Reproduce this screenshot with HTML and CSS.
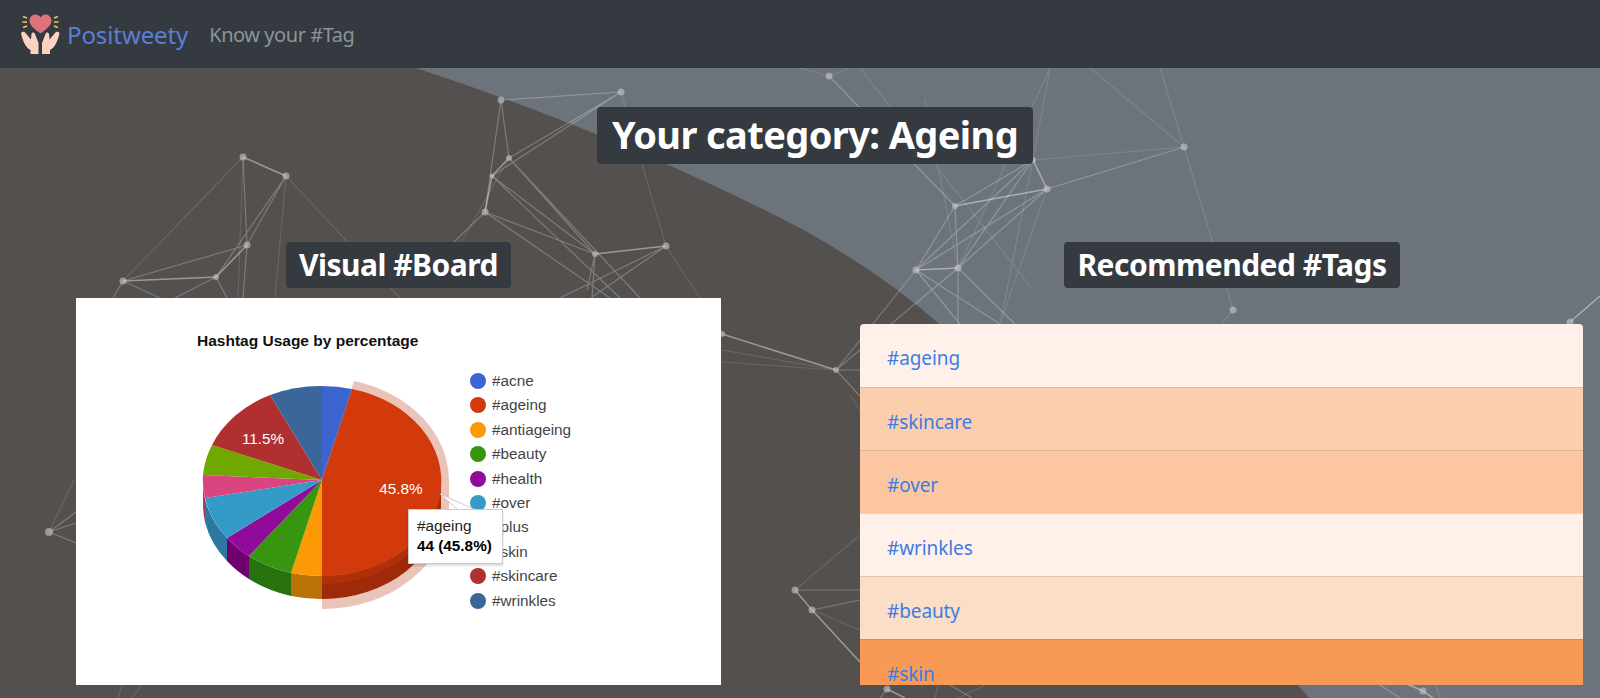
FILE: index.html
```html
<!DOCTYPE html>
<html lang="en">
<head>
    <meta charset="UTF-8">
    <meta name="viewport" content="width=device-width, initial-scale=1.0">
    <title>Positweety</title>
    <link rel="stylesheet" href="styles.css">
</head>
<body>

    <!-- Background: curved panel and network lines -->
    <svg class="backdrop" viewBox="0 0 1600 698" aria-hidden="true">
        <path class="panel" d="M416 68 Q620 135 800 228 Q880 272 938 323 L1298 685 L1309 698 H0 V68 Z"/>
        <path class="edge strong" d="M243 157L286 176 M509 158L492 176 M492 176L485 212 M247 245L216 277 M123 281L216 277 M595 254L666 246 M916 270L958 268 M1033 160L1047 189 M955 206L1047 189 M795 590L812 610 M812 610L860 662 M722 334L836 370 M1570 322L1600 296 M887 689L905 698 M1423 691L1433 698 M1423 691L1398 680"/>
        <path class="edge mid" d="M829 76L955 206 M243 157L247 245 M286 176L247 245 M286 176L216 277 M247 245L123 281 M501 100L621 92 M501 100L509 158 M501 100L485 212 M621 92L509 158 M621 92L492 176 M509 158L595 254 M492 176L595 254 M485 212L595 254 M509 158L640 298 M492 176L620 298 M485 212L420 275 M485 212L610 298 M595 254L587 290 M666 246L592 297 M666 246L560 298 M595 254L592 298 M1033 160L955 206 M1184 147L1047 189 M955 206L916 270 M955 206L958 268 M1033 160L916 270 M1047 189L916 270 M1047 189L958 268 M1033 160L958 268 M916 270L1000 324 M958 268L1015 324 M958 268L958 324 M916 270L960 324 M916 270L836 370 M958 268L836 370 M123 281L113 298 M123 281L160 298 M216 277L175 298 M216 277L227 298 M247 245L243 298 M812 610L860 600 M795 590L860 590 M49 532L76 512 M49 532L76 523 M49 532L76 543 M836 370L860 370 M836 370L860 396 M887 689L880 698 M950 685L972 698 M1380 685L1400 698"/>
        <path class="edge faint" d="M243 157L123 281 M243 157L238 298 M286 176L400 298 M286 176L275 298 M509 158L440 280 M666 246L700 298 M621 92L666 246 M829 76L800 68 M829 76L850 68 M860 68L1033 290 M1050 68L1033 160 M1050 68L958 268 M1090 68L1184 147 M1160 68L1184 147 M1184 147L1233 310 M1033 160L1000 324 M1047 189L1000 324 M1184 147L1033 160 M925 100L958 268 M1233 310L1215 332 M1570 322L1560 328 M722 350L836 370 M722 362L836 370 M795 590L860 535 M812 610L860 630 M49 532L74 480 M118 698L122 685 M132 698L142 685 M938 685L935 698 M985 685L958 698 M1440 698L1436 685 M850 395L860 410"/>
        <g class="nodes">
            <circle cx="501" cy="100" r="3.5"/><circle cx="621" cy="92" r="3.5"/><circle cx="243" cy="157" r="3.5"/>
            <circle cx="286" cy="176" r="3.5"/><circle cx="509" cy="158" r="3"/><circle cx="492" cy="176" r="2.5"/>
            <circle cx="485" cy="212" r="3.5"/><circle cx="247" cy="245" r="3.5"/><circle cx="123" cy="281" r="3.5"/>
            <circle cx="216" cy="277" r="3"/><circle cx="595" cy="254" r="3"/><circle cx="666" cy="246" r="3.5"/>
            <circle cx="829" cy="76" r="3.5"/><circle cx="1184" cy="147" r="3.5"/><circle cx="1033" cy="160" r="3"/>
            <circle cx="1047" cy="189" r="3.5"/><circle cx="955" cy="206" r="3"/><circle cx="916" cy="270" r="3.5"/>
            <circle cx="958" cy="268" r="3.5"/><circle cx="1233" cy="310" r="3.5"/><circle cx="1570" cy="322" r="3.5"/>
            <circle cx="722" cy="334" r="3"/><circle cx="836" cy="370" r="3"/><circle cx="795" cy="590" r="3.5"/>
            <circle cx="812" cy="610" r="3.5"/><circle cx="887" cy="689" r="3.5"/><circle cx="1423" cy="691" r="3.5"/>
            <circle cx="49" cy="532" r="4"/>
        </g>
    </svg>

    <!-- Navigation Bar -->
    <div class="navbar">
        <a class="brand" href="#">
            <svg class="logo" viewBox="0 0 40 40" aria-hidden="true">
                <path class="heart" d="M20.5 19.500C14 15 9.500 11 9.500 6.500C9.500 3 12.500 .5 15.500 .5C17.500 .5 19.500 1.500 20.500 3.500C21.500 1.500 23.500 .5 25.500 .5C28.500 .5 31.500 3 31.500 6.500C31.500 11 27 15 20.500 19.500Z"/>
                <path class="spark" d="M3 2.500L7 4 M2.500 8H7 M3 13.500L7 12 M38 2.500L34 4 M38.500 8H34 M38 13.500L34 12"/>
                <path class="hand" d="M1 19C2.500 17 4.500 17.500 5.500 19L11 25.500L11.500 20C12 18 14.500 18 15 20L18.500 29V40H10.500V36C6 34 2.500 27 1 19Z"/>
                <path class="hand" d="M39.500 19C38 17 36 17.500 35 19L29.500 25.500L29 20C28.500 18 26 18 25.500 20L22 29V40H30V36C34.500 34 38 27 39.500 19Z"/>
            </svg>
            Positweety
        </a>
        <a class="nav-link" href="#">Know your #Tag</a>
    </div>

    <!-- Main Content -->
    <div class="content">
        <div class="title-row">
            <h1 class="badge">Your category: Ageing</h1>
        </div>

        <div class="columns">
            <div class="col-board">
                <h2 class="badge">Visual #Board</h2>
                <div class="chart-card">
                    <svg class="chart" viewBox="76 298 645 387">
                        <text class="chart-title" x="197" y="346">Hashtag Usage by percentage</text>

                        <!-- highlight round the selected slice -->
                        <path class="ring" d="M354 381A127 103 0 0 1 449 481V506A127 103 0 0 1 322 609V480Z"/>

                        <!-- slice sides -->
                        <path fill="#2c789e" d="M205 499A119 95 0 0 0 227 538V561A119 95 0 0 1 205 522Z"/>
                        <path fill="#a83b62" d="M203 481A119 95 0 0 0 205 499V522A119 95 0 0 1 203 504Z"/>
                        <path fill="#6f0070" d="M227 538A119 95 0 0 0 249 556V579A119 95 0 0 1 227 561Z"/>
                        <path fill="#27720c" d="M249 556A119 95 0 0 0 291 573V596A119 95 0 0 1 249 579Z"/>
                        <path fill="#b87206" d="M291 573A119 95 0 0 0 322 576V599A119 95 0 0 1 291 596Z"/>
                        <path fill="#9e2a09" d="M441 481A119 95 0 0 1 322 576V599A119 95 0 0 0 441 504Z"/>
                        <path fill="#b0300a" d="M441 481A119 95 0 0 1 322 576V584A119 95 0 0 0 441 489Z"/>

                        <!-- slice tops -->
                        <path fill="#3b66d2" d="M322 480L322 386A119 95 0 0 1 352 389Z"/>
                        <path fill="#d23a0b" d="M322 480L352 389A119 95 0 0 1 322 576Z"/>
                        <path fill="#fb9a05" d="M322 480V576A119 95 0 0 1 291 573Z"/>
                        <path fill="#37950f" d="M322 480L291 573A119 95 0 0 1 249 556Z"/>
                        <path fill="#900b99" d="M322 480L249 556A119 95 0 0 1 227 538Z"/>
                        <path fill="#349bc9" d="M322 480L227 538A119 95 0 0 1 205 498Z"/>
                        <path fill="#d9467f" d="M322 480L205 498A119 95 0 0 1 203 475Z"/>
                        <path fill="#6ea800" d="M322 480L203 475A119 95 0 0 1 212 445Z"/>
                        <path fill="#b03030" d="M322 480L212 445A119 95 0 0 1 270 395Z"/>
                        <path fill="#3b6699" d="M322 480L270 395A119 95 0 0 1 322 386Z"/>

                        <text class="slice-label" x="401" y="494">45.8%</text>
                        <text class="slice-label" x="263" y="444">11.5%</text>

                        <!-- legend -->
                        <g class="legend">
                            <circle cx="478" cy="381" r="8" fill="#3b66d2"/><text x="492" y="386">#acne</text>
                            <circle cx="478" cy="405" r="8" fill="#d23a0b"/><text x="492" y="410">#ageing</text>
                            <circle cx="478" cy="430" r="8" fill="#fb9a05"/><text x="492" y="435">#antiageing</text>
                            <circle cx="478" cy="454" r="8" fill="#37950f"/><text x="492" y="459">#beauty</text>
                            <circle cx="478" cy="479" r="8" fill="#900b99"/><text x="492" y="484">#health</text>
                            <circle cx="478" cy="503" r="8" fill="#349bc9"/><text x="492" y="508">#over</text>
                            <circle cx="478" cy="527" r="8" fill="#d9467f"/><text x="492" y="532">#plus</text>
                            <circle cx="478" cy="552" r="8" fill="#6ea800"/><text x="492" y="557">#skin</text>
                            <circle cx="478" cy="576" r="8" fill="#b03030"/><text x="492" y="581">#skincare</text>
                            <circle cx="478" cy="601" r="8" fill="#3b6699"/><text x="492" y="606">#wrinkles</text>
                        </g>

                        <path class="tip-arrow" d="M440 494L458 510H476Z"/>
                    </svg>
                    <div class="chart-tooltip">
                        <div>#ageing</div>
                        <div class="tooltip-value">44 (45.8%)</div>
                    </div>
                </div>
            </div>

            <div class="col-tags">
                <div class="tags-heading">
                    <h2 class="badge">Recommended #Tags</h2>
                </div>
                <div class="tag-list">
                    <a class="tag tag-pale" href="#">#ageing</a>
                    <a class="tag tag-light" href="#">#skincare</a>
                    <a class="tag tag-mid" href="#">#over</a>
                    <a class="tag tag-pale" href="#">#wrinkles</a>
                    <a class="tag tag-soft" href="#">#beauty</a>
                    <a class="tag tag-strong" href="#">#skin</a>
                </div>
            </div>
        </div>
    </div>

</body>
</html>
```

FILE: styles.css
```css
/* Global Styles */
body {
    font-family: "Noto Sans", "Open Sans", sans-serif;
    background-color: #6c737b;
    margin: 0;
    padding: 0;
    height: 698px;
    overflow: hidden;
    position: relative;
}
a {
    text-decoration: none;
}

/* Background */
.backdrop {
    position: absolute;
    top: 0;
    left: 0;
    width: 1600px;
    height: 698px;
}
.panel {
    fill: #53504e;
}
.edge {
    fill: none;
    stroke: #fff;
    stroke-width: 1.2;
}
.edge.strong {
    stroke-opacity: 0.42;
    stroke-width: 1.5;
}
.edge.mid {
    stroke-opacity: 0.25;
}
.edge.faint {
    stroke-opacity: 0.12;
}
.nodes circle {
    fill: #c8c8c8;
    fill-opacity: 0.6;
}

/* Navbar */
.navbar {
    position: relative;
    background-color: #343a40;
    height: 68px;
    padding-left: 20px;
    display: flex;
    align-items: center;
    box-sizing: border-box;
}
.brand {
    display: flex;
    align-items: center;
    gap: 7px;
    color: #5c7ed6;
    font-size: 24px;
    letter-spacing: -0.1px;
    margin-right: 21px;
}
.logo {
    width: 40px;
    height: 40px;
}
.heart {
    fill: #e0727e;
}
.spark {
    fill: none;
    stroke: #ecc65a;
    stroke-width: 1.6;
}
.hand {
    fill: #fbd3c0;
}
.nav-link {
    color: #8d949b;
    font-size: 20px;
    letter-spacing: -0.45px;
}

/* Page content */
.content {
    position: relative;
}
.title-row {
    text-align: center;
    padding-top: 39px;
    padding-left: 30px;
}
.badge {
    display: inline-block;
    background-color: #343a40;
    color: white;
    font-weight: bold;
    border-radius: 4px;
    margin: 0;
    line-height: 1.2;
}
h1.badge {
    font-size: 38px;
    padding: 5px 15px 6px;
    letter-spacing: -0.6px;
}
h2.badge {
    font-size: 30px;
    padding: 5px 13px;
    letter-spacing: -0.5px;
}
.columns {
    display: flex;
    margin-top: 78px;
}
.col-board {
    width: 645px;
    margin-left: 76px;
    text-align: center;
}
.col-tags {
    width: 723px;
    margin-left: 139px;
}
.tags-heading {
    text-align: center;
    padding-left: 21px;
}

/* Chart */
.chart-card {
    position: relative;
    background-color: white;
    height: 387px;
    margin-top: 10px;
}
.chart {
    display: block;
    width: 645px;
    height: 387px;
    font-family: "Liberation Sans", Arial, sans-serif;
    font-size: 15.3px;
}
.chart-title {
    font-weight: bold;
    font-size: 15.5px;
    fill: #111;
}
.ring {
    fill: #eac4b8;
}
.slice-label {
    fill: white;
    text-anchor: middle;
}
.legend text {
    fill: #444;
}
.tip-arrow {
    fill: white;
    stroke: #ccc;
}
.chart-tooltip {
    position: absolute;
    left: 332px;
    top: 211px;
    width: 95px;
    height: 55px;
    box-sizing: border-box;
    padding: 6px 8px;
    background-color: white;
    border: 1px solid #ccc;
    box-shadow: 0 2px 2px rgba(0, 0, 0, 0.15);
    font-family: "Liberation Sans", Arial, sans-serif;
    font-size: 15.3px;
    line-height: 20px;
    color: #222;
    text-align: left;
    white-space: nowrap;
}
.tooltip-value {
    font-weight: bold;
    color: #000;
}

/* Tag list */
.tag-list {
    margin-top: 36px;
    height: 361px;
    overflow: hidden;
    border-radius: 4px 4px 0 0;
}
.tag {
    display: block;
    height: 63px;
    box-sizing: border-box;
    padding: 21px 27px 15px;
    font-size: 19px;
    line-height: 26px;
    letter-spacing: -0.1px;
    color: #3b7de4;
    border-top: 1px solid rgba(0, 0, 0, 0.1);
}
.tag:first-child {
    border-top: none;
}
.tag-pale {
    background-color: #fff1e9;
}
.tag-light {
    background-color: #fbcfae;
}
.tag-mid {
    background-color: #fcc6a0;
}
.tag-soft {
    background-color: #fbdec7;
}
.tag-strong {
    background-color: #f89a55;
}
```
